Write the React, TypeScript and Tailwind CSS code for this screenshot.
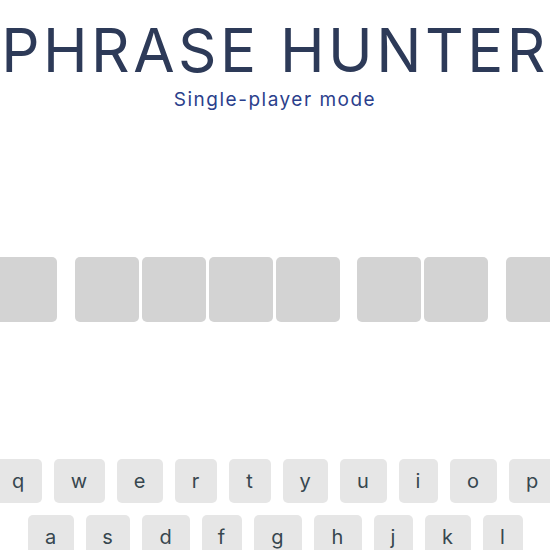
import React from "react";

const row1: [string, number][] = [
  ["q", 47], ["w", 51], ["e", 46], ["r", 42], ["t", 42],
  ["y", 45], ["u", 47], ["i", 39], ["o", 47], ["p", 47],
];
const row2: [string, number][] = [
  ["a", 46], ["s", 44], ["d", 48], ["f", 40], ["g", 48],
  ["h", 48], ["j", 39], ["k", 46], ["l", 40],
];

const words = [3, 4, 2, 3];

function Key({ letter, width }: { letter: string; width: number }) {
  return (
    <button
      className="h-[44px] shrink-0 rounded-[5px] bg-[#e6e6e6] text-[20px] text-[#37474f] flex items-center justify-center"
      style={{ width }}
    >
      {letter}
    </button>
  );
}

export default function App() {
  return (
    <div
      className="w-[550px] h-[550px] overflow-hidden bg-white"
      style={{ fontFamily: "Inter, 'DejaVu Sans', sans-serif" }}
    >
      <header className="pt-[20px] flex flex-col items-center">
        <h1 className="text-[60px] leading-[60px] font-normal tracking-[3.5px] text-[#2d3a58] whitespace-nowrap">
          PHRASE HUNTER
        </h1>
        <p className="mt-[10px] text-[19px] leading-[19px] tracking-[1.5px] text-[#2b3f8c] whitespace-nowrap">
          Single-player mode
        </p>
      </header>

      <div className="mt-[148px] flex gap-[17.5px] ml-[-141px] w-max">
        {words.map((n, wi) => (
          <div key={wi} className="flex gap-[3px]">
            {Array.from({ length: n }).map((_, i) => (
              <div key={i} className="w-[64px] h-[65px] rounded-[5px] bg-[#d3d3d3]" />
            ))}
          </div>
        ))}
      </div>

      <div className="mt-[137px] flex flex-col gap-[12px]">
        <div className="flex justify-center gap-[12px]">
          {row1.map(([l, w]) => (
            <Key key={l} letter={l} width={w} />
          ))}
        </div>
        <div className="flex justify-center gap-[12px]">
          {row2.map(([l, w]) => (
            <Key key={l} letter={l} width={w} />
          ))}
        </div>
      </div>
    </div>
  );
}
